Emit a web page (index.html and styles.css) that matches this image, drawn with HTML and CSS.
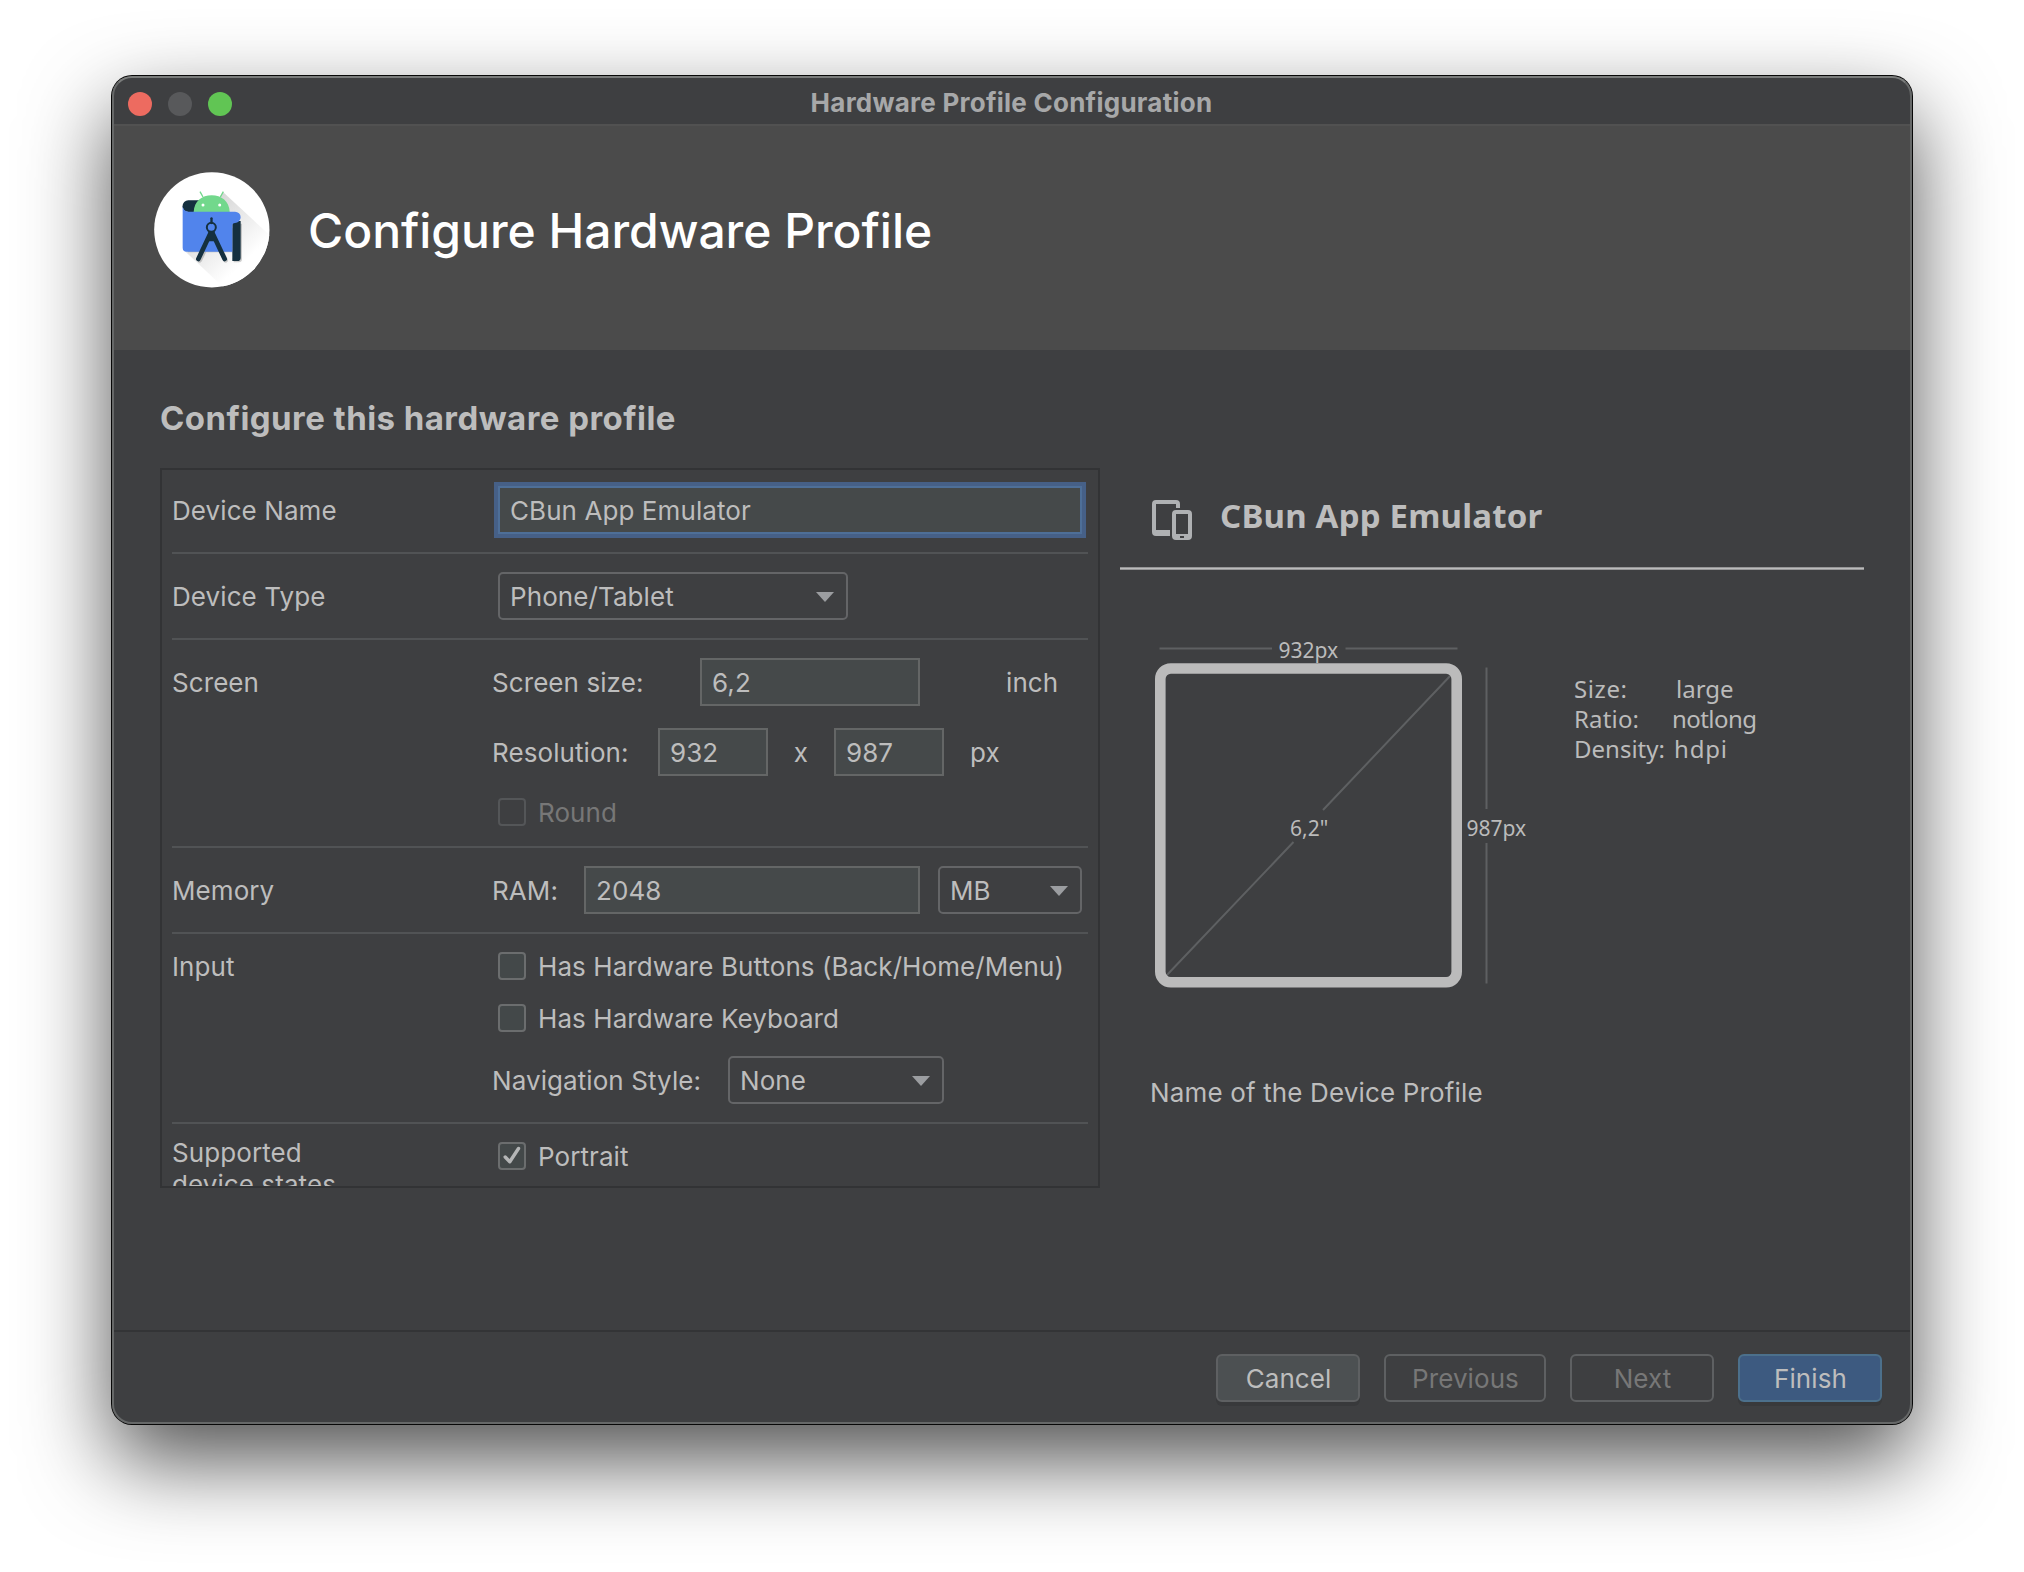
FILE: index.html
```
<!DOCTYPE html>
<html lang="en">
<head>
<meta charset="utf-8">
<title>Hardware Profile Configuration</title>
<link rel="stylesheet" href="styles.css">
</head>
<body>
<div class="window">
  <div class="titlebar">
    <div class="lights">
      <span class="light light-close"></span>
      <span class="light light-min"></span>
      <span class="light light-zoom"></span>
    </div>
    <div class="titlebar-text">Hardware Profile Configuration</div>
  </div>

  <header class="banner">
    <svg class="logo" viewBox="42 35 348 348">
      <defs>
        <linearGradient id="cast" gradientUnits="userSpaceOnUse" x1="200" y1="150" x2="330" y2="290">
          <stop offset="0" stop-color="#d8d8d8"/>
          <stop offset="1" stop-color="#ffffff"/>
        </linearGradient>
        <clipPath id="disc"><circle cx="215.5" cy="208.5" r="173"/></clipPath>
      </defs>
      <circle cx="215.5" cy="208.5" r="173" fill="#fff"/>
      <path d="M249 95 L400 235 L300 400 L260 390 L132 270 Z" fill="url(#cast)" clip-path="url(#disc)"/>
      <g fill="#000" opacity=".18" transform="translate(4 4)">
        <path d="M277 186 H302 V292 a10 10 0 0 1 -10 10 H277 Z"/>
        <path d="M128 200 H277 V272 H140 Z"/>
        <path d="M210 222 L175 296 M218 222 L253 296" stroke="#000" stroke-width="14" stroke-linecap="round"/>
      </g>
      <path d="M145 120 H200 V155 H145 a17 17 0 0 1 0 -35 Z" fill="#15303f"/>
      <path d="M161 155 C162 123 186 105 215 105 C244 105 268 123 269 155 Z" fill="#72d88c"/>
      <path d="M180 94 L189 110 M250 94 L241 110" stroke="#72d88c" stroke-width="4" fill="none"/>
      <circle cx="189" cy="134" r="4.5" fill="#fff"/>
      <circle cx="239" cy="134" r="4.5" fill="#fff"/>
      <path d="M277 182 H302 V292 a10 10 0 0 1 -10 10 H277 Z" fill="#15303f"/>
      <path d="M128 137 Q129 153 146 154 H285 a17 17 0 0 1 17 17 a17 17 0 0 1 -17 17 Q277 188 277 196 V274 H140 a12 12 0 0 1 -12 -12 Z" fill="#5184ec"/>
      <g stroke="#15303f" fill="none">
        <path d="M214.500 174 V188" stroke-width="7" stroke-linecap="round"/>
        <circle cx="214" cy="201" r="13.500" stroke-width="6"/>
        <path d="M210 222 L175 296 M219 222 L254 296" stroke-width="14" stroke-linecap="round"/>
        <path d="M205 213 H224 L227 243 H202 Z" fill="#15303f" stroke="none"/>
      </g>
    </svg>
    <h1 class="banner-title">Configure Hardware Profile</h1>
  </header>

  <main class="content">
    <h2 class="section-title">Configure this hardware profile</h2>
    <div class="columns">
      <section class="form">
        <div class="row row-name">
          <div class="label">Device Name</div>
          <div class="controls">
            <div class="line"><div class="field field-focus">CBun App Emulator</div></div>
          </div>
        </div>
        <div class="row">
          <div class="label">Device Type</div>
          <div class="controls">
            <div class="line"><div class="combo combo-type">Phone/Tablet<i class="arrow"></i></div></div>
          </div>
        </div>
        <div class="row row-screen">
          <div class="label">Screen</div>
          <div class="controls">
            <div class="line">
              <span class="caption cap-size">Screen size:</span>
              <div class="field field-size">6,2</div>
              <span class="caption unit-inch">inch</span>
            </div>
            <div class="line line-res">
              <span class="caption cap-res">Resolution:</span>
              <div class="field field-res">932</div>
              <span class="caption times">x</span>
              <div class="field field-res">987</div>
              <span class="caption unit-px">px</span>
            </div>
            <div class="line line-round disabled"><span class="check"></span><span class="caption">Round</span></div>
          </div>
        </div>
        <div class="row">
          <div class="label">Memory</div>
          <div class="controls">
            <div class="line">
              <span class="caption cap-ram">RAM:</span>
              <div class="field field-ram">2048</div>
              <div class="combo combo-unit">MB<i class="arrow"></i></div>
            </div>
          </div>
        </div>
        <div class="row row-input">
          <div class="label">Input</div>
          <div class="controls">
            <div class="line"><span class="check"></span><span class="caption">Has Hardware Buttons (Back/Home/Menu)</span></div>
            <div class="line line-keyboard"><span class="check"></span><span class="caption">Has Hardware Keyboard</span></div>
            <div class="line line-nav">
              <span class="caption cap-nav">Navigation Style:</span>
              <div class="combo combo-nav">None<i class="arrow"></i></div>
            </div>
          </div>
        </div>
        <div class="row row-states">
          <div class="label">Supported<br>device states</div>
          <div class="controls">
            <div class="line line-portrait">
              <span class="check"><svg class="tick" viewBox="0 0 28 28"><path d="M7.200 15 L11.800 19.800 L20.500 6.500" fill="none" stroke="#b4b5b6" stroke-width="3.400" stroke-linecap="round" stroke-linejoin="round"/></svg></span>
              <span class="caption">Portrait</span>
            </div>
          </div>
        </div>
      </section>

      <section class="preview">
        <div class="preview-head">
          <svg class="device-icon" viewBox="0 0 40 40" fill="#afb1b3">
            <path fill-rule="evenodd" d="M4 0 H24 a4 4 0 0 1 4 4 V8 H24 V4 H4 V30 H18 V36 H4 a4 4 0 0 1 -4 -4 V4 a4 4 0 0 1 4 -4 Z"/>
            <path fill-rule="evenodd" d="M24 10 H36 a4 4 0 0 1 4 4 V36 a4 4 0 0 1 -4 4 H24 a4 4 0 0 1 -4 -4 V14 a4 4 0 0 1 4 -4 Z M24 14 V34 H36 V14 Z M28 36 V38 H32 V36 Z"/>
          </svg>
          <h3 class="preview-title">CBun App Emulator</h3>
        </div>
        <svg class="diagram" viewBox="1120 567 744 503">
          <rect x="1120" y="567.300" width="744" height="2.400" fill="#bbb"/>
          <g stroke="#5e6062" stroke-width="2" fill="none">
            <path d="M1159.500 648.500 H1272 M1345.500 648.500 H1457.500"/>
            <path d="M1486.500 667.500 V809 M1486.500 843 V983.500"/>
            <path d="M1166 976 L1293.500 842 M1323 810 L1452 674"/>
          </g>
          <rect x="1160.300" y="668.500" width="296.400" height="313.800" rx="10.500" fill="none" stroke="#bbb" stroke-width="10.600"/>
          <g class="dims">
            <text x="1278.500" y="658">932px</text>
            <text x="1466.500" y="836">987px</text>
            <text x="1290" y="836">6,2"</text>
          </g>
          <g class="facts">
            <text x="1574" y="698" textLength="53">Size:</text><text x="1676" y="698">large</text>
            <text x="1574" y="728" textLength="65">Ratio:</text><text x="1672" y="728" textLength="85">notlong</text>
            <text x="1574" y="758">Density:</text><text x="1674" y="758" textLength="53">hdpi</text>
          </g>
        </svg>
        <p class="hint">Name of the Device Profile</p>
      </section>
    </div>
  </main>

  <footer class="footer">
    <div class="button button-normal">Cancel</div>
    <div class="button button-off button-wide">Previous</div>
    <div class="button button-off">Next</div>
    <div class="button button-primary">Finish</div>
  </footer>
</div>
</body>
</html>
```
FILE: styles.css
```
* { box-sizing: border-box; }

body {
  margin: 0;
  width: 2024px;
  height: 1572px;
  overflow: hidden;
  padding: 76px 112px 0;
  background: #fff;
  color: #bdbdbd;
  font: 400 26px/32px Inter, "Liberation Sans", sans-serif;
  letter-spacing: 0.08px;
}

h1, h2, h3, p { margin: 0; }

.window {
  position: relative;
  display: flex;
  flex-direction: column;
  width: 1800px;
  height: 1348px;
  border-radius: 20px;
  background: #3e3f41;
  box-shadow: 0 0 0 1px #080808, 0 36px 86px rgba(0, 0, 0, 0.69);
}

/* light rim drawn over the window edge */
.window::after {
  content: "";
  position: absolute;
  inset: 0;
  border: 2px solid #666868;
  border-top-color: #7a7c7b;
  border-radius: 20px;
}

.titlebar {
  display: grid;
  grid-template-columns: 124px 1fr 124px;
  align-items: center;
  height: 50px;
  border-bottom: 2px solid #515151;
}
.lights { display: flex; gap: 16px; padding: 8px 0 0 16px; }
.light { width: 24px; height: 24px; border-radius: 50%; }
.light-close { background: #ed6b60; }
.light-min { background: #58595b; }
.light-zoom { background: #61c554; }
.titlebar-text {
  padding: 5px 1px 0 0;
  text-align: center;
  color: #a7a8a9;
  font-weight: 700;
  letter-spacing: 0.25px;
}

.banner {
  display: flex;
  align-items: center;
  gap: 38px;
  height: 224px;
  padding: 0 42px 16px;
  background: #4b4b4b;
}
.logo { width: 116px; height: 116px; }
.banner-title {
  padding-top: 2px;
  color: #fff;
  font-size: 48px;
  line-height: 58px;
  font-weight: 500;
  letter-spacing: -0.03px;
}

.content { flex: 1; padding: 48px 48px 0; }
.section-title {
  font-size: 33px;
  line-height: 40px;
  font-weight: 700;
  letter-spacing: 0.45px;
}
.columns {
  display: grid;
  grid-template-columns: 940px 744px;
  gap: 20px;
  margin-top: 30px;
}

.form {
  height: 720px;
  padding: 0 10px;
  border: 2px solid #323335;
  overflow: hidden;
}
.row {
  display: flex;
  height: 86px;
  padding-top: 18px;
  border-bottom: 2px solid #515355;
}
.label { width: 320px; padding-top: 9px; }
.controls { flex: 1; }
.line { display: flex; align-items: center; white-space: nowrap; }

.row-name { height: 84px; padding-top: 16px; }
.row-screen { height: 208px; }
.row-input { height: 190px; padding-top: 15px; }
.row-input .label { padding-top: 2px; }
.row-states { height: 120px; padding-top: 13px; border-bottom: 0; }
.row-states .label { padding-top: 0; }

.line-res { margin-top: 22px; }
.line-round { margin-top: 19px; }
.line-keyboard { margin-top: 18px; }
.line-nav { margin-top: 21px; }
.line-portrait { margin-top: 2px; }

.field, .combo {
  height: 48px;
  padding-left: 10px;
  border: 2px solid #646666;
}
.field { background: #45494a; line-height: 46px; }
.field-focus {
  width: 584px;
  margin-left: 6px;
  border-color: #4e6f98;
  box-shadow: 0 0 0 4px #466087;
}
.field-size { width: 220px; }
.field-res { width: 110px; }
.field-ram { width: 336px; }

.combo {
  display: flex;
  align-items: center;
  justify-content: space-between;
  padding-top: 2px;
  padding-right: 12px;
  border-radius: 5px;
  border-color: #646567;
}
.combo-type { width: 350px; margin-left: 6px; }
.combo-unit { width: 144px; margin-left: 18px; }
.combo-nav { width: 216px; }
.arrow {
  width: 18px;
  height: 10px;
  background: #9b9da0;
  clip-path: polygon(0 0, 100% 0, 50% 100%);
}

.caption { flex: none; padding-top: 2px; }
.cap-size { width: 208px; }
.cap-res { width: 166px; }
.cap-ram { width: 92px; }
.cap-nav { width: 236px; }
.unit-inch { margin-left: 86px; }
.times { width: 66px; text-align: center; }
.unit-px { margin-left: 26px; }

.check {
  flex: none;
  width: 28px;
  height: 28px;
  margin: 0 12px 0 6px;
  border: 2px solid #6b6d6e;
  border-radius: 4px;
  background: #434849;
}
.disabled { color: #777; }
.disabled .check { background: none; border-color: #545658; }
.tick { display: block; width: 28px; height: 28px; margin: -2px; }

.preview-head {
  display: flex;
  align-items: flex-start;
  gap: 28px;
  height: 99px;
  padding: 26px 0 0 32px;
}
.device-icon { width: 40px; height: 40px; margin-top: 6px; }
.preview-title {
  font: 700 33px/44px "Noto Sans", sans-serif;
  letter-spacing: 0.2px;
}
.diagram { display: block; width: 744px; height: 503px; fill: #bbb; }
.dims, .facts {
  font-family: "Noto Sans", sans-serif;
  font-weight: 400;
  letter-spacing: 0;
}
.dims { font-size: 21px; }
.facts { font-size: 24px; }
.hint { margin-top: 7px; padding-left: 30px; letter-spacing: 0.15px; }

.footer {
  display: flex;
  justify-content: flex-end;
  gap: 24px;
  height: 94px;
  padding: 22px 30px 0;
  border-top: 2px solid #333436;
}
.button {
  width: 144px;
  height: 48px;
  padding-left: 1px;
  border: 2px solid #5e6062;
  border-radius: 6px;
  line-height: 46px;
  text-align: center;
}
.button-wide { width: 162px; }
.button-normal { background: #4c5052; box-shadow: 0 4px 0 #38393b; }
.button-off { color: #777; }
.button-primary { background: #3d5a80; border-color: #4c708c; box-shadow: 0 4px 0 #38393b; }
```
